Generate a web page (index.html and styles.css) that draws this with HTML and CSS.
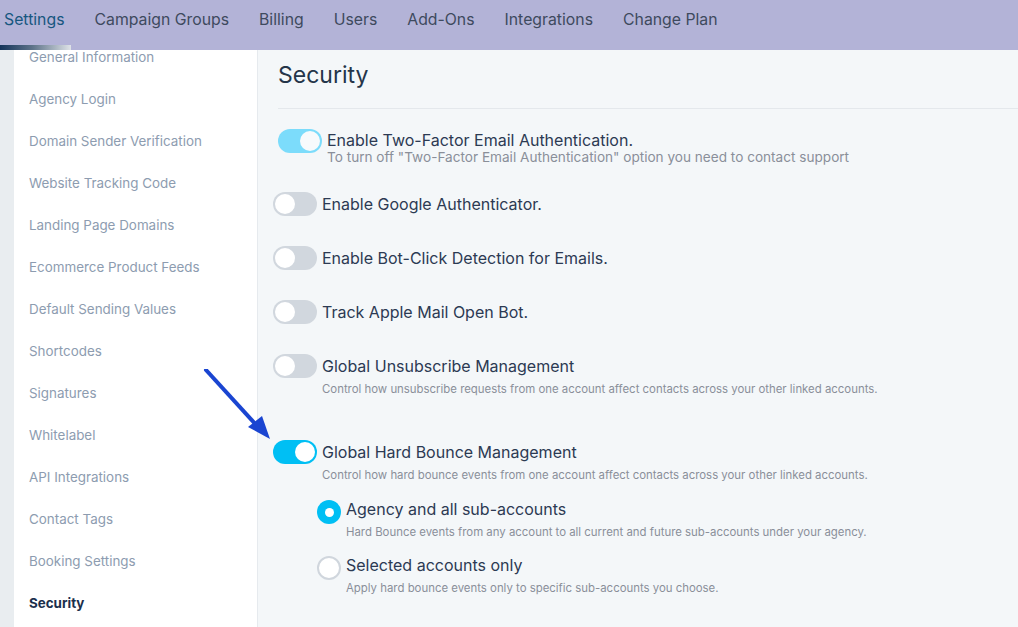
FILE: index.html
```html
<!DOCTYPE html>
<html>
<head>
<meta charset="utf-8">
<link rel="stylesheet" href="styles.css">
</head>
<body>
<header class="topnav">
  <a class="nav-item active">Settings</a>
  <a class="nav-item">Campaign Groups</a>
  <a class="nav-item">Billing</a>
  <a class="nav-item">Users</a>
  <a class="nav-item">Add-Ons</a>
  <a class="nav-item">Integrations</a>
  <a class="nav-item">Change Plan</a>
</header>
<div class="scroll-indicator"></div>
<div class="layout">
  <div class="gutter"></div>
  <aside class="sidebar">
    <ul class="side-list">
      <li>General Information</li>
      <li>Agency Login</li>
      <li>Domain Sender Verification</li>
      <li>Website Tracking Code</li>
      <li>Landing Page Domains</li>
      <li>Ecommerce Product Feeds</li>
      <li>Default Sending Values</li>
      <li>Shortcodes</li>
      <li>Signatures</li>
      <li>Whitelabel</li>
      <li>API Integrations</li>
      <li>Contact Tags</li>
      <li>Booking Settings</li>
      <li class="current">Security</li>
    </ul>
  </aside>
  <main class="content">
    <h1 class="page-title">Security</h1>
    <div class="divider"></div>

    <div class="setting first">
      <span class="toggle on-light"><span class="knob"></span></span>
      <div class="setting-text">
        <div class="setting-title">Enable Two-Factor Email Authentication.</div>
        <div class="setting-sub sub-13">To turn off "Two-Factor Email Authentication" option you need to contact support</div>
      </div>
    </div>

    <div class="setting single">
      <span class="toggle"><span class="knob"></span></span>
      <div class="setting-text"><div class="setting-title">Enable Google Authenticator.</div></div>
    </div>

    <div class="setting single">
      <span class="toggle"><span class="knob"></span></span>
      <div class="setting-text"><div class="setting-title">Enable Bot-Click Detection for Emails.</div></div>
    </div>

    <div class="setting single">
      <span class="toggle"><span class="knob"></span></span>
      <div class="setting-text"><div class="setting-title">Track Apple Mail Open Bot.</div></div>
    </div>

    <div class="setting single">
      <span class="toggle"><span class="knob"></span></span>
      <div class="setting-text">
        <div class="setting-title">Global Unsubscribe Management</div>
        <div class="setting-sub">Control how unsubscribe requests from one account affect contacts across your other linked accounts.</div>
      </div>
    </div>

    <div class="setting hard">
      <span class="toggle on"><span class="knob"></span></span>
      <div class="setting-text">
        <div class="setting-title">Global Hard Bounce Management</div>
        <div class="setting-sub">Control how hard bounce events from one account affect contacts across your other linked accounts.</div>
      </div>
    </div>

    <div class="radio-group">
      <div class="radio-row">
        <span class="radio checked"></span>
        <div class="radio-text">
          <div class="radio-title">Agency and all sub-accounts</div>
          <div class="setting-sub">Hard Bounce events from any account to all current and future sub-accounts under your agency.</div>
        </div>
      </div>
      <div class="radio-row">
        <span class="radio"></span>
        <div class="radio-text">
          <div class="radio-title">Selected accounts only</div>
          <div class="setting-sub">Apply hard bounce events only to specific sub-accounts you choose.</div>
        </div>
      </div>
    </div>
  </main>
</div>
<svg class="arrow" width="80" height="90" viewBox="0 0 80 90">
  <line x1="6" y1="1" x2="58" y2="58" stroke="#1a45d1" stroke-width="4" stroke-linecap="round"/>
  <polygon points="70,70 48,58 62,47" fill="#1a45d1"/>
</svg>
</body>
</html>
```
FILE: styles.css
```css
* { box-sizing: border-box; }
html, body {
  margin: 0;
  padding: 0;
  width: 1018px;
  height: 627px;
  overflow: hidden;
  font-family: Inter, "Noto Sans", sans-serif;
  background: #f4f7f9;
}

.topnav {
  height: 50px;
  background: #b3b3d7;
  display: flex;
  gap: 30px;
  padding: 9px 0 0 4px;
  position: relative;
  z-index: 2;
}
.nav-item {
  font-size: 15.8px;
  line-height: 22px;
  color: #3e4a5e;
}
.nav-item.active { color: #17577f; }

.scroll-indicator {
  position: absolute;
  left: 0;
  top: 45px;
  width: 71px;
  height: 5px;
  background: linear-gradient(90deg, #14335a 0%, #5c7288 45%, #dfe3e8 100%);
  z-index: 3;
}

.layout {
  display: flex;
  height: 577px;
}
.gutter {
  width: 14px;
  background: #e9edf0;
  flex: none;
}
.sidebar {
  width: 244px;
  flex: none;
  background: #ffffff;
  border-right: 1px solid #e6eaee;
  overflow: hidden;
}
.side-list {
  list-style: none;
  margin: -14px 0 0 0;
  padding: 0;
}
.side-list li {
  height: 42px;
  line-height: 42px;
  padding-left: 15px;
  font-size: 13.4px;
  color: #8d9cb0;
}
.side-list li.current {
  color: #1b2f4c;
  font-weight: 700;
}

.content {
  flex: 1;
  padding: 11px 0 0 15px;
}
.page-title {
  margin: 0 0 0 5px;
  font-size: 23px;
  line-height: 29px;
  font-weight: 400;
  color: #243549;
}
.divider {
  margin: 18px 0 0 5px;
  border-top: 1px solid #e4e8ec;
}

.setting {
  display: flex;
  align-items: flex-start;
  gap: 5px;
}
.setting.first { margin: 19px 0 0 5px; }
.setting.first .toggle { margin-top: 1px; }
.setting.first + .setting { margin-top: 26px; }
.setting.single + .setting.single { margin-top: 30px; }
.setting.hard { margin-top: 43px; }

.toggle {
  width: 44px;
  height: 24px;
  border-radius: 12px;
  background: #d1d7de;
  flex: none;
  display: flex;
  align-items: center;
  padding: 2px;
}
.toggle .knob {
  width: 20px;
  height: 20px;
  border-radius: 50%;
  background: #ffffff;
}
.toggle.on-light { background: #7cdcfb; justify-content: flex-end; }
.toggle.on-light .knob { background: #f7fafc; }
.toggle.on { background: #00bff4; justify-content: flex-end; }

.setting-title {
  font-size: 16px;
  line-height: 24px;
  color: #2c3a53;
}
.setting-sub {
  font-size: 11.4px;
  line-height: 16px;
  margin-top: 3px;
  color: #8a8f99;
}
.setting-sub.sub-13 {
  font-size: 13.6px;
  line-height: 17px;
  margin-top: -3px;
}

.radio-group {
  margin: 15px 0 0 44px;
  display: flex;
  flex-direction: column;
  gap: 14px;
}
.radio-row {
  display: flex;
  align-items: flex-start;
  gap: 5px;
}
.radio {
  width: 24px;
  height: 24px;
  border-radius: 50%;
  border: 2px solid #d0d6dd;
  background: #ffffff;
  margin-top: 2px;
  flex: none;
  display: flex;
  align-items: center;
  justify-content: center;
}
.radio.checked {
  border: none;
  background: #00bff4;
}
.radio.checked::after {
  content: "";
  width: 9px;
  height: 9px;
  border-radius: 50%;
  background: #ffffff;
}
.radio-title {
  font-size: 16px;
  line-height: 22px;
  color: #2c3a53;
}
.radio-text .setting-sub { margin-top: 4px; }

.arrow {
  position: absolute;
  left: 200px;
  top: 369px;
  z-index: 4;
}
```
